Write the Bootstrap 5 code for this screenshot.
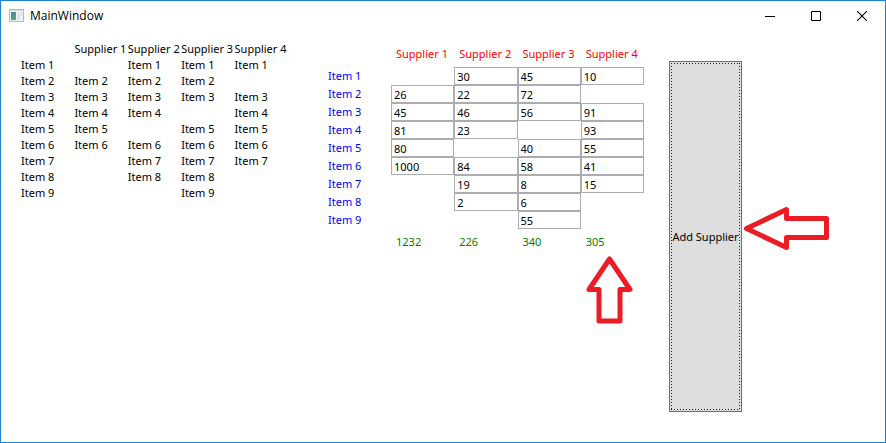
<!DOCTYPE html>
<html lang="en">
<head>
<meta charset="utf-8">
<meta name="viewport" content="width=device-width, initial-scale=1">
<title>MainWindow</title>
<link href="https://cdn.jsdelivr.net/npm/bootstrap@5.3.0/dist/css/bootstrap.min.css" rel="stylesheet">
<style>
body { font-family: "Noto Sans", "Open Sans", sans-serif; font-size: 11px; line-height: 16px; color: #000; background: #fff; }
.app-window { border: 1px solid #1883d7; }
.title-bar { height: 30px; }
.title-text { font-family: "Open Sans", sans-serif; font-size: 12px; font-weight: 400; line-height: 16px; padding-left: 1px; }
.caption-btn { width: 46px; height: 30px; border: 0; background: transparent; padding: 0; }
.caption-btn:hover { background: #e5e5e5; }
.content-area { padding: 10px 20px 30px; gap: 25px; }
.grid-table { table-layout: fixed; border-collapse: separate; border-spacing: 0; white-space: nowrap; }
.grid-table th { font-weight: 400; }
.grid-table th, .grid-table td { padding: 0; }
.stock-table { width: 267px; margin-right: 10px; }
.stock-table th, .stock-table td { height: 16px; }
.price-table { width: 321px; }
.price-table .label-col { width: 68px; }
.price-table th, .price-table tfoot td { padding-left: 5px; }
.price-table thead th, .price-table tfoot td { height: 26px; }
.price-table thead th { color: #f00; }
.price-table tbody th { color: #00f; height: 18px; }
.price-table tfoot td { color: #008000; }
.price-table input { display: block; width: 100%; height: 18px; padding: 0 2px; border: 1px solid #abadb3; border-radius: 0; background: #fff; color: #000; line-height: 16px; }
.supplier-panel { margin-top: 20px; }
.add-btn { width: 73px; padding: 0; border: 1px solid #707070; background: #ddd; color: #000; white-space: nowrap; }
.add-btn::before {
  content: ""; position: absolute; inset: 1px;
  background:
    repeating-linear-gradient(90deg, #222 0 1px, transparent 1px 3px) top / 100% 1px no-repeat,
    repeating-linear-gradient(90deg, #222 0 1px, transparent 1px 3px) bottom / 100% 1px no-repeat,
    repeating-linear-gradient(#222 0 1px, transparent 1px 3px) left / 1px 100% no-repeat,
    repeating-linear-gradient(#222 0 1px, transparent 1px 3px) right / 1px 100% no-repeat;
}
.arrow { position: absolute; fill: #fff; stroke: #ed1c24; stroke-width: 5; stroke-linejoin: round; pointer-events: none; }
.arrow-total { left: 262px; top: 214px; }
.arrow-add { left: 73px; top: 144px; }
</style>
</head>
<body>
<div class="app-window d-flex flex-column min-vh-100">
  <header class="title-bar d-flex align-items-center">
    <svg class="ms-2 flex-shrink-0" width="16" height="14" viewBox="0 0 16 14" aria-hidden="true">
      <defs><linearGradient id="pane" x1="0" y1="0" x2="0.4" y2="1"><stop offset="0" stop-color="#4b7ba8"/><stop offset="1" stop-color="#52ab7c"/></linearGradient></defs>
      <path d="M.5.5h14v12H.5z" fill="#f3f4f6" stroke="#b4b8be"/>
      <path d="M1 1h13v1H1z" fill="#d5d8dd"/>
      <path d="M2 3h5v8H2z" fill="url(#pane)"/>
      <path d="M8 3h3v8H8z" fill="#e2e4ea"/>
      <path d="M12 3h1v4h-1z" fill="#c8dcd2"/>
    </svg>
    <h1 class="title-text mb-0 ms-1 me-auto">MainWindow</h1>
    <button type="button" class="caption-btn d-flex align-items-center justify-content-center" aria-label="Minimize"><svg width="10" height="10"><path d="M0 5.500h10" stroke="#000"/></svg></button>
    <button type="button" class="caption-btn d-flex align-items-center justify-content-center" aria-label="Maximize"><svg width="10" height="10"><path d="M.5.5h9v9h-9z" fill="none" stroke="#000"/></svg></button>
    <button type="button" class="caption-btn d-flex align-items-center justify-content-center" aria-label="Close"><svg width="10" height="10"><path d="M0 0l10 10M10 0L0 10" stroke="#000" stroke-width="1.100"/></svg></button>
  </header>

  <main class="content-area d-flex flex-grow-1">
    <div>
      <table class="grid-table stock-table">
        <thead><tr><td></td><th scope="col">Supplier 1</th><th scope="col">Supplier 2</th><th scope="col">Supplier 3</th><th scope="col">Supplier 4</th></tr></thead>
        <tbody>
          <tr><th scope="row">Item 1</th><td></td><td>Item 1</td><td>Item 1</td><td>Item 1</td></tr>
          <tr><th scope="row">Item 2</th><td>Item 2</td><td>Item 2</td><td>Item 2</td><td></td></tr>
          <tr><th scope="row">Item 3</th><td>Item 3</td><td>Item 3</td><td>Item 3</td><td>Item 3</td></tr>
          <tr><th scope="row">Item 4</th><td>Item 4</td><td>Item 4</td><td></td><td>Item 4</td></tr>
          <tr><th scope="row">Item 5</th><td>Item 5</td><td></td><td>Item 5</td><td>Item 5</td></tr>
          <tr><th scope="row">Item 6</th><td>Item 6</td><td>Item 6</td><td>Item 6</td><td>Item 6</td></tr>
          <tr><th scope="row">Item 7</th><td></td><td>Item 7</td><td>Item 7</td><td>Item 7</td></tr>
          <tr><th scope="row">Item 8</th><td></td><td>Item 8</td><td>Item 8</td><td></td></tr>
          <tr><th scope="row">Item 9</th><td></td><td></td><td>Item 9</td><td></td></tr>
        </tbody>
      </table>
    </div>

    <div class="position-relative">
      <table class="grid-table price-table">
        <thead><tr><td class="label-col"></td><th scope="col">Supplier 1</th><th scope="col">Supplier 2</th><th scope="col">Supplier 3</th><th scope="col">Supplier 4</th></tr></thead>
        <tbody>
          <tr><th scope="row">Item 1</th><td></td><td><input type="text" aria-label="Item 1, Supplier 2" value="30"></td><td><input type="text" aria-label="Item 1, Supplier 3" value="45"></td><td><input type="text" aria-label="Item 1, Supplier 4" value="10"></td></tr>
          <tr><th scope="row">Item 2</th><td><input type="text" aria-label="Item 2, Supplier 1" value="26"></td><td><input type="text" aria-label="Item 2, Supplier 2" value="22"></td><td><input type="text" aria-label="Item 2, Supplier 3" value="72"></td><td></td></tr>
          <tr><th scope="row">Item 3</th><td><input type="text" aria-label="Item 3, Supplier 1" value="45"></td><td><input type="text" aria-label="Item 3, Supplier 2" value="46"></td><td><input type="text" aria-label="Item 3, Supplier 3" value="56"></td><td><input type="text" aria-label="Item 3, Supplier 4" value="91"></td></tr>
          <tr><th scope="row">Item 4</th><td><input type="text" aria-label="Item 4, Supplier 1" value="81"></td><td><input type="text" aria-label="Item 4, Supplier 2" value="23"></td><td></td><td><input type="text" aria-label="Item 4, Supplier 4" value="93"></td></tr>
          <tr><th scope="row">Item 5</th><td><input type="text" aria-label="Item 5, Supplier 1" value="80"></td><td></td><td><input type="text" aria-label="Item 5, Supplier 3" value="40"></td><td><input type="text" aria-label="Item 5, Supplier 4" value="55"></td></tr>
          <tr><th scope="row">Item 6</th><td><input type="text" aria-label="Item 6, Supplier 1" value="1000"></td><td><input type="text" aria-label="Item 6, Supplier 2" value="84"></td><td><input type="text" aria-label="Item 6, Supplier 3" value="58"></td><td><input type="text" aria-label="Item 6, Supplier 4" value="41"></td></tr>
          <tr><th scope="row">Item 7</th><td></td><td><input type="text" aria-label="Item 7, Supplier 2" value="19"></td><td><input type="text" aria-label="Item 7, Supplier 3" value="8"></td><td><input type="text" aria-label="Item 7, Supplier 4" value="15"></td></tr>
          <tr><th scope="row">Item 8</th><td></td><td><input type="text" aria-label="Item 8, Supplier 2" value="2"></td><td><input type="text" aria-label="Item 8, Supplier 3" value="6"></td><td></td></tr>
          <tr><th scope="row">Item 9</th><td></td><td></td><td><input type="text" aria-label="Item 9, Supplier 3" value="55"></td><td></td></tr>
        </tbody>
        <tfoot><tr><td></td><td>1232</td><td>226</td><td>340</td><td>305</td></tr></tfoot>
      </table>
      <svg class="arrow arrow-total" width="49" height="72" viewBox="0 0 49 72" aria-hidden="true"><path d="M24.500 4L45 34.500H35V66H14V34.500H4z"/></svg>
    </div>

    <div class="supplier-panel position-relative d-flex">
      <button type="button" class="add-btn position-relative">Add Supplier</button>
      <svg class="arrow arrow-add" width="90" height="48" viewBox="0 0 90 48" aria-hidden="true"><path d="M4.500 23.500L44.500 4.500V13.500H84.500V32.500H44.500V42.500z"/></svg>
    </div>
  </main>
</div>
<script src="https://cdn.jsdelivr.net/npm/bootstrap@5.3.0/dist/js/bootstrap.bundle.min.js"></script>
</body>
</html>
